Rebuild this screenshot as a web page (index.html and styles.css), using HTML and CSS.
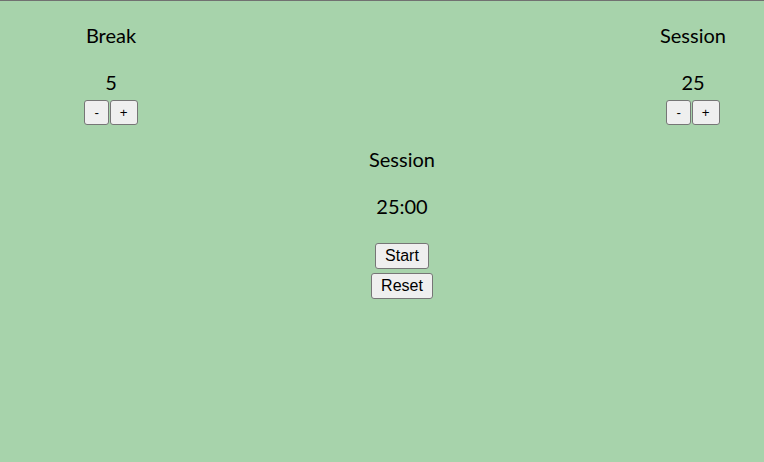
FILE: index.html
```html
<!DOCTYPE html>
<html lang="en">
<head>
<meta charset="utf-8">
<title>Pomodoro Clock</title>
<link rel="stylesheet" href="styles.css">
</head>
<body>
<div class="app">
  <div class="settings">
    <div class="control">
      <p class="label">Break</p>
      <p class="value">5</p>
      <div class="steppers">
        <button class="step">-</button><button class="step">+</button>
      </div>
    </div>
    <div class="control">
      <p class="label">Session</p>
      <p class="value">25</p>
      <div class="steppers">
        <button class="step">-</button><button class="step">+</button>
      </div>
    </div>
  </div>
  <div class="timer">
    <p class="label">Session</p>
    <p class="value">25:00</p>
    <div class="actions">
      <button class="action">Start</button>
      <button class="action">Reset</button>
    </div>
  </div>
</div>
</body>
</html>
```
FILE: styles.css
```css
html, body {
  margin: 0;
  padding: 0;
}
body {
  min-height: 100vh;
  box-sizing: border-box;
  background: #a7d3ab;
  border-top: 1px solid #717171;
  font-family: Lato, "Noto Sans", sans-serif;
  font-size: 20px;
  line-height: 27px;
  color: #000;
}
.app {
  padding-left: 40px;
}
.settings {
  display: flex;
  justify-content: space-between;
  padding: 21px 21px 0 21px;
}
.control {
  width: 100px;
  text-align: center;
}
.label {
  margin: 0;
}
.value {
  margin: 20px 0 0 0;
}
.steppers {
  margin-top: 4px;
  display: flex;
  justify-content: center;
  gap: 1px;
}
button {
  font-family: "Liberation Sans", Arial, sans-serif;
  color: #000;
  background: #efefef;
  border: 1px solid #767676;
  border-radius: 3px;
  padding: 0 9px;
  margin: 0;
  box-sizing: border-box;
}
.step {
  font-size: 13.33px;
  height: 25px;
  line-height: 23px;
}
.timer {
  text-align: center;
  padding-top: 21px;
}
.actions {
  margin-top: 23px;
  display: flex;
  flex-direction: column;
  align-items: center;
  gap: 4px;
}
.action {
  font-size: 16px;
  height: 26px;
  line-height: 24px;
}
```
